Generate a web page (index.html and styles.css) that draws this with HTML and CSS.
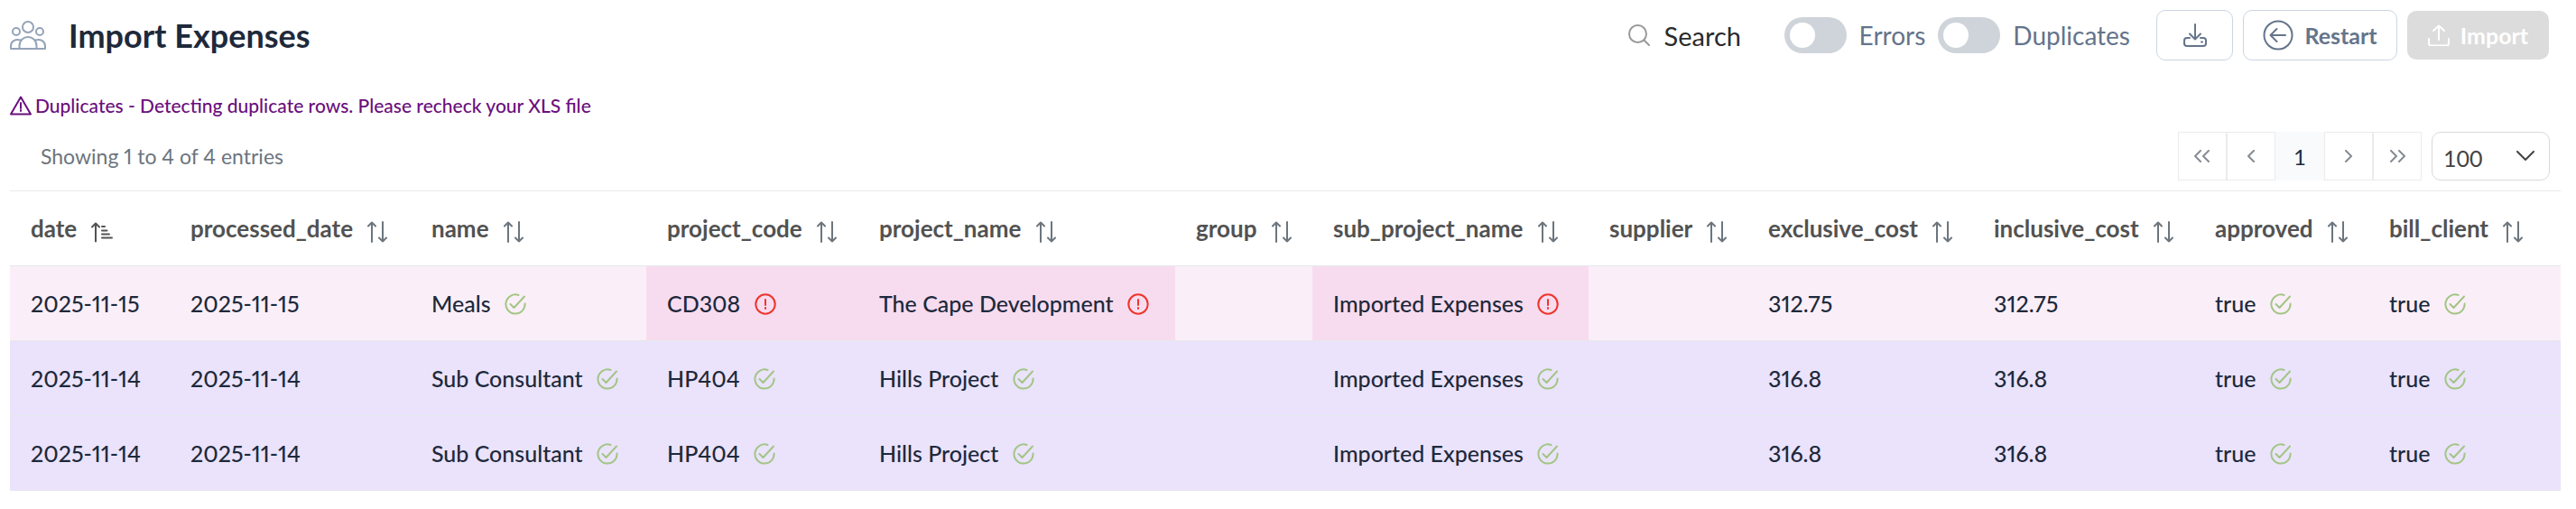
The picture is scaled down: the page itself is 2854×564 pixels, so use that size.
FILE: index.html
```html
<!DOCTYPE html>
<html lang="en">
<head>
  <meta charset="UTF-8" />
  <meta name="viewport" content="width=device-width, initial-scale=1" />
  <title>Import Expenses</title>
  <link rel="stylesheet" href="styles.css">
</head>
<body>

  <svg class="sprite" aria-hidden="true">
    <symbol id="sort" viewBox="0 0 22 24">
      <path d="M5 23V1.500M1 5.500L5 1.500L9 5.500M17 1V22.500M13 18.500L17 22.500L21 18.500" />
    </symbol>
    <symbol id="sort-asc" viewBox="0 0 24 24">
      <path d="M5 22.500V3M1 6.500L5 2.500L9 6.500M12 6H15M12 10.500H17.500M12 14.500H20M12 18.500H23" />
    </symbol>
    <symbol id="ok" viewBox="0 0 24 24">
      <path d="M15.500 2A10.600 10.600 0 1 0 22.600 11.500M6.500 12L10.500 16L22 3.500" />
    </symbol>
    <symbol id="error" viewBox="0 0 24 24">
      <circle cx="12" cy="12" r="10.700" />
      <path d="M12 7V13M12 16V17" />
    </symbol>
  </svg>

  <header class="topbar">
    <svg class="icon-users" viewBox="0 0 40 34">
      <circle cx="20" cy="8" r="6" />
      <circle cx="7" cy="13" r="4" />
      <circle cx="33" cy="13" r="4" />
      <path d="M10.500 32V29C10.500 15.500 29.500 15.500 29.500 29V32M12 22.500C6 20.500 1 24 1 29V32H39V29C39 24 34 20.500 28 22.500" />
    </svg>
    <h1>Import Expenses</h1>

    <div class="search">
      <svg class="icon-search" viewBox="0 0 24 24"><circle cx="10.500" cy="10.500" r="9.500" /><path d="M17.500 17.500L23 23" /></svg>
      <input type="search" placeholder="Search" aria-label="Search">
    </div>

    <div class="filters">
      <input type="checkbox" class="switch" id="errors">
      <label for="errors">Errors</label>
      <input type="checkbox" class="switch" id="duplicates">
      <label for="duplicates">Duplicates</label>
    </div>

    <div class="actions">
      <button type="button" class="btn btn-download" aria-label="Download">
        <svg class="icon-download" viewBox="0 0 26 26">
          <path d="M13 1V17M7 11.500L13 17.500L19 11.500M7 16H4C2 16 1 17 1 19V22C1 24 2 25 4 25H22C24 25 25 24 25 22V19C25 17 24 16 22 16H19M20 20.500H21" />
        </svg>
      </button>
      <button type="button" class="btn btn-restart">
        <svg class="icon-back" viewBox="0 0 34 34"><circle cx="17" cy="17" r="15.500" /><path d="M25 17H9M15.500 10L8.500 17L15.500 24" /></svg>
        Restart
      </button>
      <button type="button" class="btn btn-import" disabled>
        <svg class="icon-upload" viewBox="0 0 24 24"><path d="M12 17V1.500M6 7L12 1.500L18 7M1 16V21C1 22.500 2 23.500 3.500 23.500H20.500C22 23.500 23 22.500 23 21V16" /></svg>
        Import
      </button>
    </div>
  </header>

  <p class="warning">
    <svg class="icon-warning" viewBox="0 0 24 22"><path d="M12 1.500L23 20.500H1ZM12 8V14M12 16V17" /></svg>
    Duplicates - Detecting duplicate rows. Please recheck your XLS file
  </p>

  <div class="tablebar">
    <span class="showing">Showing 1 to 4 of 4 entries</span>
    <nav class="pager" aria-label="Pages">
      <button type="button" aria-label="First page"><svg viewBox="0 0 20 14"><path d="M8 1L2 7L8 13M17 1L11 7L17 13" /></svg></button>
      <button type="button" aria-label="Previous page"><svg viewBox="0 0 20 14"><path d="M13 1L7 7L13 13" /></svg></button>
      <button type="button" class="active">1</button>
      <button type="button" aria-label="Next page"><svg viewBox="0 0 20 14"><path d="M7 1L13 7L7 13" /></svg></button>
      <button type="button" aria-label="Last page"><svg viewBox="0 0 20 14"><path d="M3 1L9 7L3 13M12 1L18 7L12 13" /></svg></button>
    </nav>
    <div class="page-size">
      <select aria-label="Rows per page">
        <option>100</option>
      </select>
      <svg class="icon-chevron" viewBox="0 0 20 12"><path d="M1 1L10 10L19 1" /></svg>
    </div>
  </div>

  <table>
    <colgroup>
      <col class="c-date"><col class="c-processed"><col class="c-name"><col class="c-code">
      <col class="c-project"><col class="c-group"><col class="c-sub"><col class="c-supplier">
      <col class="c-exclusive"><col class="c-inclusive"><col class="c-approved"><col class="c-bill">
    </colgroup>
    <thead>
      <tr>
        <th>date <svg class="icon sorted"><use href="#sort-asc" /></svg></th>
        <th>processed_date <svg class="icon"><use href="#sort" /></svg></th>
        <th>name <svg class="icon"><use href="#sort" /></svg></th>
        <th>project_code <svg class="icon"><use href="#sort" /></svg></th>
        <th>project_name <svg class="icon"><use href="#sort" /></svg></th>
        <th>group <svg class="icon"><use href="#sort" /></svg></th>
        <th>sub_project_name <svg class="icon"><use href="#sort" /></svg></th>
        <th>supplier <svg class="icon"><use href="#sort" /></svg></th>
        <th>exclusive_cost <svg class="icon"><use href="#sort" /></svg></th>
        <th>inclusive_cost <svg class="icon"><use href="#sort" /></svg></th>
        <th>approved <svg class="icon"><use href="#sort" /></svg></th>
        <th>bill_client <svg class="icon"><use href="#sort" /></svg></th>
      </tr>
    </thead>
    <tbody>
      <tr class="row-error">
        <td>2025-11-15</td>
        <td>2025-11-15</td>
        <td>Meals <svg class="icon ok"><use href="#ok" /></svg></td>
        <td class="invalid">CD308 <svg class="icon error"><use href="#error" /></svg></td>
        <td class="invalid">The Cape Development <svg class="icon error"><use href="#error" /></svg></td>
        <td></td>
        <td class="invalid">Imported Expenses <svg class="icon error"><use href="#error" /></svg></td>
        <td></td>
        <td>312.75</td>
        <td>312.75</td>
        <td>true <svg class="icon ok"><use href="#ok" /></svg></td>
        <td>true <svg class="icon ok"><use href="#ok" /></svg></td>
      </tr>
      <tr class="row-duplicate">
        <td>2025-11-14</td>
        <td>2025-11-14</td>
        <td>Sub Consultant <svg class="icon ok"><use href="#ok" /></svg></td>
        <td>HP404 <svg class="icon ok"><use href="#ok" /></svg></td>
        <td>Hills Project <svg class="icon ok"><use href="#ok" /></svg></td>
        <td></td>
        <td>Imported Expenses <svg class="icon ok"><use href="#ok" /></svg></td>
        <td></td>
        <td>316.8</td>
        <td>316.8</td>
        <td>true <svg class="icon ok"><use href="#ok" /></svg></td>
        <td>true <svg class="icon ok"><use href="#ok" /></svg></td>
      </tr>
      <tr class="row-duplicate">
        <td>2025-11-14</td>
        <td>2025-11-14</td>
        <td>Sub Consultant <svg class="icon ok"><use href="#ok" /></svg></td>
        <td>HP404 <svg class="icon ok"><use href="#ok" /></svg></td>
        <td>Hills Project <svg class="icon ok"><use href="#ok" /></svg></td>
        <td></td>
        <td>Imported Expenses <svg class="icon ok"><use href="#ok" /></svg></td>
        <td></td>
        <td>316.8</td>
        <td>316.8</td>
        <td>true <svg class="icon ok"><use href="#ok" /></svg></td>
        <td>true <svg class="icon ok"><use href="#ok" /></svg></td>
      </tr>
    </tbody>
  </table>

</body>
</html>
```
FILE: styles.css
```css
* {
  box-sizing: border-box;
}
body {
  font-family: Lato, "Open Sans", sans-serif;
  font-size: 25px;
  line-height: 30px;
  font-variant-numeric: proportional-nums;
  background: #fff;
  color: #1e293b;
  margin: 0;
  padding: 11px 17px 19px 11px;
}
input, button, select {
  font-family: inherit;
}
svg {
  fill: none;
  stroke: currentColor;
  stroke-width: 2;
  stroke-linecap: round;
  stroke-linejoin: round;
  flex: none;
}
.sprite {
  display: none;
}

/* top bar */
.topbar {
  display: flex;
  align-items: center;
  height: 56px;
  padding-right: 13px;
}
.icon-users {
  width: 40px;
  height: 34px;
  color: #94a3b8;
}
h1 {
  font-size: 36px;
  line-height: 44px;
  font-weight: 700;
  margin: 0 auto 0 25px;
}
.search {
  display: flex;
  align-items: center;
  gap: 16px;
}
.icon-search {
  width: 24px;
  height: 24px;
  color: #999;
}
.search input {
  width: 133px;
  padding: 0;
  border: none;
  background: none;
  font-size: 29px;
}
.search input::placeholder {
  color: #2b2b2b;
}
.filters {
  display: flex;
  align-items: center;
  gap: 14px;
  color: #64748b;
  font-size: 28px;
}
.switch {
  appearance: none;
  width: 69px;
  height: 40px;
  margin: 0;
  padding: 6px;
  border-radius: 20px;
  background: #cfd4da;
}
.switch::before {
  content: "";
  display: block;
  width: 28px;
  height: 28px;
  border-radius: 50%;
  background: #fff;
}
.switch:checked::before {
  margin-left: auto;
}
.actions {
  display: flex;
  align-items: center;
  gap: 11px;
  margin-left: 29px;
}
.btn {
  display: flex;
  align-items: center;
  justify-content: center;
  gap: 12px;
  height: 56px;
  border: 1px solid #cbd5e1;
  border-radius: 10px;
  background: #fff;
  color: #64748b;
  font-size: 25px;
  font-weight: 700;
}
.btn-download {
  width: 85px;
}
.btn-restart {
  width: 171px;
}
.btn-import {
  width: 157px;
  height: 54px;
  border: none;
  background: #dcdcdc;
  color: #fff;
}
.icon-download {
  width: 26px;
  height: 26px;
}
.icon-back {
  width: 34px;
  height: 34px;
}
.icon-upload {
  width: 24px;
  height: 24px;
}

.warning {
  display: flex;
  align-items: center;
  gap: 4px;
  margin: 35px 0 14px;
  color: #6b0f7d;
  font-size: 21px;
  font-weight: 500;
}
.icon-warning {
  width: 24px;
  height: 22px;
}

/* entries, pages, page size */
.tablebar {
  display: flex;
  align-items: center;
  height: 54px;
  margin-bottom: 11px;
  padding: 0 12px 0 34px;
}
.showing {
  margin-right: auto;
  color: #6c757d;
  font-size: 23px;
}
.pager {
  display: flex;
  margin-right: 11px;
}
.pager button {
  display: flex;
  align-items: center;
  justify-content: center;
  width: 54px;
  height: 54px;
  padding: 0;
  border: 1px solid #ebebeb;
  background: #fff;
  color: #868c94;
  font-size: 24px;
}
.pager .active {
  border-color: #f8fafc;
  background: #f8fafc;
  color: #1e293b;
}
.pager svg {
  width: 20px;
  height: 14px;
}
.page-size {
  display: grid;
  align-items: center;
}
.page-size select,
.icon-chevron {
  grid-area: 1 / 1;
}
.page-size select {
  appearance: none;
  width: 131px;
  height: 54px;
  padding: 4px 12px 0;
  border: 1px solid #d9d9d9;
  border-radius: 10px;
  background: #fff;
  color: #444;
  font-size: 25px;
}
.icon-chevron {
  justify-self: end;
  width: 20px;
  height: 12px;
  margin-right: 17px;
  color: #444;
  pointer-events: none;
}

/* table */
table {
  width: 100%;
  table-layout: fixed;
  border-collapse: collapse;
  border-top: 1px solid #e9eaec;
}
.c-date { width: 177px; }
.c-processed { width: 267px; }
.c-name { width: 261px; }
.c-code { width: 235px; }
.c-project { width: 351px; }
.c-group { width: 152px; }
.c-sub { width: 306px; }
.c-supplier { width: 176px; }
.c-exclusive { width: 250px; }
.c-inclusive { width: 245px; }
.c-approved { width: 193px; }
.c-bill { width: 213px; }
th, td {
  height: 83px;
  padding: 0 0 0 23px;
  border-bottom: 1px solid #e6e8ec;
  text-align: left;
  white-space: nowrap;
}
th {
  color: #525252;
  font-size: 26px;
  font-weight: 700;
}
td {
  font-weight: 500;
}
.icon {
  width: 24px;
  height: 24px;
  margin-left: 9px;
  vertical-align: -3px;
}
th .icon {
  color: #6c757d;
  vertical-align: -6px;
}
th .sorted {
  color: #525252;
}
.ok {
  color: #a3c585;
}
.error {
  color: #f0342b;
}
.row-error {
  background: #faeff8;
}
.invalid {
  background: #f7dcef;
}
.row-duplicate {
  background: #eae3fb;
}
```
